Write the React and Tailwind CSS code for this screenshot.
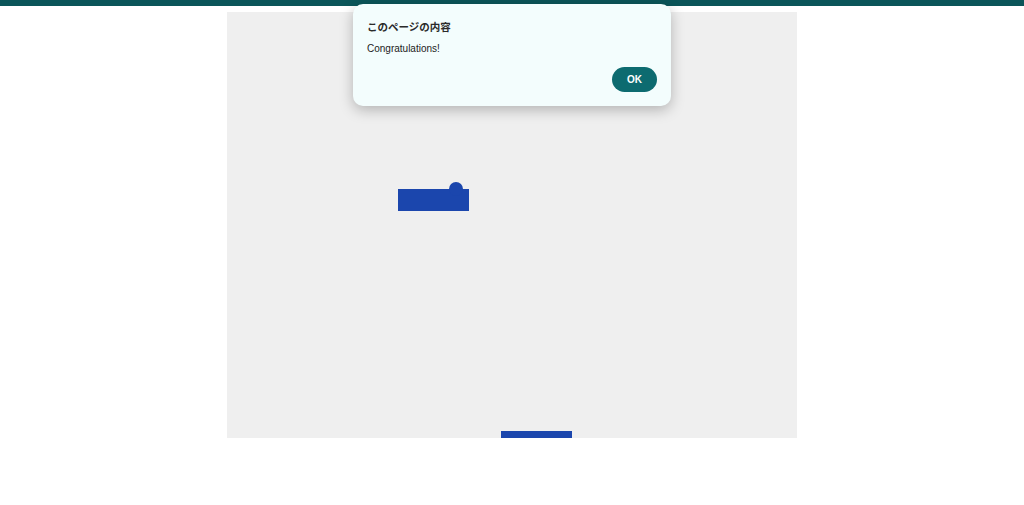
import React from "react";

const App = () => {
  return (
    <div className="relative min-h-[505px] w-full bg-white font-['Liberation_Sans','Noto_Sans_CJK_JP',sans-serif]">
      {/* top bar */}
      <div className="h-[6px] w-full bg-[#0b5559]" />

      {/* game canvas */}
      <div className="relative mx-auto mt-[6px] h-[426px] w-[570px] overflow-hidden bg-[#efefef]">
        <div className="absolute left-[171px] top-[177px] h-[22px] w-[71px] bg-[#1b46ad]" />
        <div className="absolute left-[222px] top-[170px] h-[14px] w-[14px] rounded-full bg-[#1b46ad]" />
        <div className="absolute left-[274px] top-[419px] h-[10px] w-[71px] bg-[#1b46ad]" />
      </div>

      {/* alert dialog */}
      <div className="absolute left-1/2 top-[4px] w-[318px] -translate-x-1/2 rounded-[10px] bg-[#f3fdfd] px-[14px] pb-[14px] pt-[15px] shadow-[0_4px_14px_rgba(0,0,0,0.25)]">
        <div className="font-['Noto_Sans_CJK_JP',sans-serif] text-[10.5px] font-bold leading-[16px] text-[#2a2a2a]">このページの内容</div>
        <div className="mt-[7px] text-[10px] leading-[14px] text-[#222]">Congratulations!</div>
        <div className="mt-[11px] flex justify-end">
          <button className="h-[25px] w-[45px] rounded-full bg-[#0d6b70] text-[10px] font-bold text-white">
            OK
          </button>
        </div>
      </div>
    </div>
  );
};

export default App;
